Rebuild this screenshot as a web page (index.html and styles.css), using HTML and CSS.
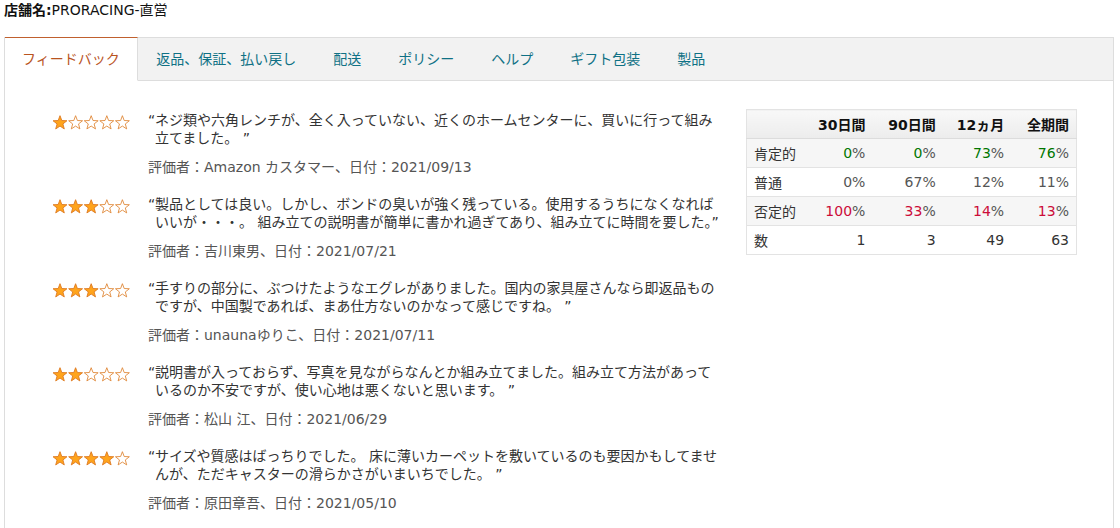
FILE: index.html
```html
<!DOCTYPE html>
<html lang="ja">
<head>
<meta charset="utf-8">
<title>店舗名:PRORACING-直営</title>
<link rel="stylesheet" href="styles.css">
</head>
<body>
<svg class="defs" aria-hidden="true">
  <defs>
    <symbol id="star-full" viewBox="-8 -8 16 16">
      <polygon points="0,-7.3 1.8,-2.48 6.94,-2.26 2.92,0.95 4.29,5.91 0,3.07 -4.29,5.91 -2.92,0.95 -6.94,-2.26 -1.8,-2.48" fill="#ffa41c" stroke="#de7921" stroke-width="0.9" stroke-linejoin="round"/>
    </symbol>
    <symbol id="star-empty" viewBox="-8 -8 16 16">
      <polygon points="0,-7.3 1.8,-2.48 6.94,-2.26 2.92,0.95 4.29,5.91 0,3.07 -4.29,5.91 -2.92,0.95 -6.94,-2.26 -1.8,-2.48" fill="#fff" stroke="#e0893a" stroke-width="0.9" stroke-linejoin="round"/>
    </symbol>
  </defs>
</svg>

<div class="shop"><b>店舗名:</b>PRORACING-直営</div>

<div class="tabbox">
  <ul class="tabs">
    <li class="tab active">フィードバック</li>
    <li class="tab">返品、保証、払い戻し</li>
    <li class="tab">配送</li>
    <li class="tab">ポリシー</li>
    <li class="tab">ヘルプ</li>
    <li class="tab">ギフト包装</li>
    <li class="tab">製品</li>
    <li class="tab-fill"></li>
  </ul>

  <div class="panel">
    <div class="reviews">
      <div class="review">
        <svg class="stars" viewBox="0 0 78 16"><use href="#star-full" x="0" y="0" width="16" height="16"/><use href="#star-empty" x="15.6" y="0" width="16" height="16"/><use href="#star-empty" x="31.2" y="0" width="16" height="16"/><use href="#star-empty" x="46.8" y="0" width="16" height="16"/><use href="#star-empty" x="62.4" y="0" width="16" height="16"/></svg>
        <div class="body">
          <p class="quote"><span class="oq">“</span>ネジ類や六角レンチが、全く入っていない、近くのホームセンターに、買いに行って組み立てました。 ”</p>
          <p class="by">評価者：Amazon カスタマー、日付：2021/09/13</p>
        </div>
      </div>

      <div class="review">
        <svg class="stars" viewBox="0 0 78 16"><use href="#star-full" x="0" y="0" width="16" height="16"/><use href="#star-full" x="15.6" y="0" width="16" height="16"/><use href="#star-full" x="31.2" y="0" width="16" height="16"/><use href="#star-empty" x="46.8" y="0" width="16" height="16"/><use href="#star-empty" x="62.4" y="0" width="16" height="16"/></svg>
        <div class="body">
          <p class="quote"><span class="oq">“</span>製品としては良い。しかし、ボンドの臭いが強く残っている。使用するうちになくなればいいが・・・。 組み立ての説明書が簡単に書かれ過ぎてあり、組み立てに時間を要した。”</p>
          <p class="by">評価者：吉川東男、日付：2021/07/21</p>
        </div>
      </div>

      <div class="review">
        <svg class="stars" viewBox="0 0 78 16"><use href="#star-full" x="0" y="0" width="16" height="16"/><use href="#star-full" x="15.6" y="0" width="16" height="16"/><use href="#star-full" x="31.2" y="0" width="16" height="16"/><use href="#star-empty" x="46.8" y="0" width="16" height="16"/><use href="#star-empty" x="62.4" y="0" width="16" height="16"/></svg>
        <div class="body">
          <p class="quote"><span class="oq">“</span>手すりの部分に、ぶつけたようなエグレがありました。国内の家具屋さんなら即返品ものですが、中国製であれば、まあ仕方ないのかなって感じですね。 ”</p>
          <p class="by">評価者：unaunaゆりこ、日付：2021/07/11</p>
        </div>
      </div>

      <div class="review">
        <svg class="stars" viewBox="0 0 78 16"><use href="#star-full" x="0" y="0" width="16" height="16"/><use href="#star-full" x="15.6" y="0" width="16" height="16"/><use href="#star-empty" x="31.2" y="0" width="16" height="16"/><use href="#star-empty" x="46.8" y="0" width="16" height="16"/><use href="#star-empty" x="62.4" y="0" width="16" height="16"/></svg>
        <div class="body">
          <p class="quote"><span class="oq">“</span>説明書が入っておらず、写真を見ながらなんとか組み立てました。組み立て方法があっているのか不安ですが、使い心地は悪くないと思います。 ”</p>
          <p class="by">評価者：松山 江、日付：2021/06/29</p>
        </div>
      </div>

      <div class="review">
        <svg class="stars" viewBox="0 0 78 16"><use href="#star-full" x="0" y="0" width="16" height="16"/><use href="#star-full" x="15.6" y="0" width="16" height="16"/><use href="#star-full" x="31.2" y="0" width="16" height="16"/><use href="#star-full" x="46.8" y="0" width="16" height="16"/><use href="#star-empty" x="62.4" y="0" width="16" height="16"/></svg>
        <div class="body">
          <p class="quote"><span class="oq">“</span>サイズや質感はばっちりでした。 床に薄いカーペットを敷いているのも要因かもしてませんが、ただキャスターの滑らかさがいまいちでした。 ”</p>
          <p class="by">評価者：原田章吾、日付：2021/05/10</p>
        </div>
      </div>
    </div>

    <table class="summary">
      <thead>
        <tr><th class="label"></th><th>30日間</th><th>90日間</th><th>12ヵ月</th><th>全期間</th></tr>
      </thead>
      <tbody>
        <tr><td class="label">肯定的</td><td><span class="pos">0</span>%</td><td><span class="pos">0</span>%</td><td><span class="pos">73</span>%</td><td><span class="pos">76</span>%</td></tr>
        <tr><td class="label">普通</td><td>0%</td><td>67%</td><td>12%</td><td>11%</td></tr>
        <tr><td class="label">否定的</td><td><span class="neg">100</span>%</td><td><span class="neg">33</span>%</td><td><span class="neg">14</span>%</td><td><span class="neg">13</span>%</td></tr>
        <tr><td class="label">数</td><td class="count">1</td><td class="count">3</td><td class="count">49</td><td class="count">63</td></tr>
      </tbody>
    </table>
  </div>
</div>
</body>
</html>
```

FILE: styles.css
```css
* {
  box-sizing: border-box;
}

html, body {
  margin: 0;
  padding: 0;
  background: #fff;
}

body {
  font-family: "DejaVu Sans", "Noto Sans CJK JP", sans-serif;
  font-size: 14px;
  color: #111;
  overflow: hidden;
}

.defs {
  display: block;
  width: 0;
  height: 0;
  overflow: hidden;
}

.shop {
  height: 20px;
  line-height: 20px;
  padding-left: 4px;
}

.shop b {
  font-weight: bold;
}

.tabbox {
  margin: 17px 0 0 4px;
  width: 1110px;
  border-left: 1px solid #ddd;
  border-right: 1px solid #ddd;
}

.tabs {
  display: flex;
  margin: 0;
  padding: 0;
  list-style: none;
  background: #f2f2f2;
}

.tab {
  height: 44px;
  line-height: 42px;
  padding: 0 18.5px;
  border-top: 1px solid #ddd;
  border-bottom: 1px solid #ddd;
  color: #0f7185;
  white-space: nowrap;
}

.tab.active {
  padding: 0 17px;
  background: #fff;
  color: #b9541f;
  border-top-color: #c0602e;
  border-bottom-color: #fff;
  border-right: 1px solid #ddd;
}

.tab-fill {
  flex: 1;
  height: 44px;
  border-top: 1px solid #ddd;
  border-bottom: 1px solid #ddd;
}

.panel {
  display: flex;
  align-items: flex-start;
  padding: 28px 0 60px 47px;
  background: #fff;
}

.reviews {
  width: 676px;
  margin-right: 18px;
  padding-top: 2px;
}

.review {
  display: flex;
  align-items: flex-start;
  margin-bottom: 19px;
}

.stars {
  flex: none;
  width: 78px;
  height: 16px;
  margin-top: 4px;
}

.body {
  width: 574px;
  margin-left: 18px;
  margin-right: 6px;
}

.quote {
  margin: 0;
  padding-left: 7px;
  text-indent: -7px;
  line-height: 18px;
  color: #333;
}

.oq {
  display: inline-block;
  width: 7px;
  text-indent: 0;
}

.by {
  margin: 11px 0 0;
  line-height: 18px;
  color: #555;
}

.summary {
  width: 331px;
  border-collapse: collapse;
  border: 1px solid #e3e3e3;
  font-size: 14px;
}

.summary th,
.summary td {
  height: 29px;
  padding: 0 7px;
  text-align: right;
  border-bottom: 1px solid #e3e3e3;
  white-space: nowrap;
}

.summary th {
  font-weight: bold;
  color: #111;
  background: linear-gradient(#f8f8f8, #ececec);
  border-bottom-color: #dcdcdc;
}

.summary th:nth-child(2), .summary td:nth-child(2) { width: 70px; }
.summary th:nth-child(3), .summary td:nth-child(3) { width: 71px; }
.summary th:nth-child(4), .summary td:nth-child(4) { width: 69px; }
.summary th:nth-child(5), .summary td:nth-child(5) { width: 66px; }

.summary .label {
  width: 55px;
  text-align: left;
  color: #333;
}

.summary td {
  color: #555;
}

.summary tbody tr:nth-child(odd) {
  background: #f6f6f6;
}

.summary .count {
  color: #333;
}

.pos {
  color: #007600;
}

.neg {
  color: #cc0c39;
}
```
